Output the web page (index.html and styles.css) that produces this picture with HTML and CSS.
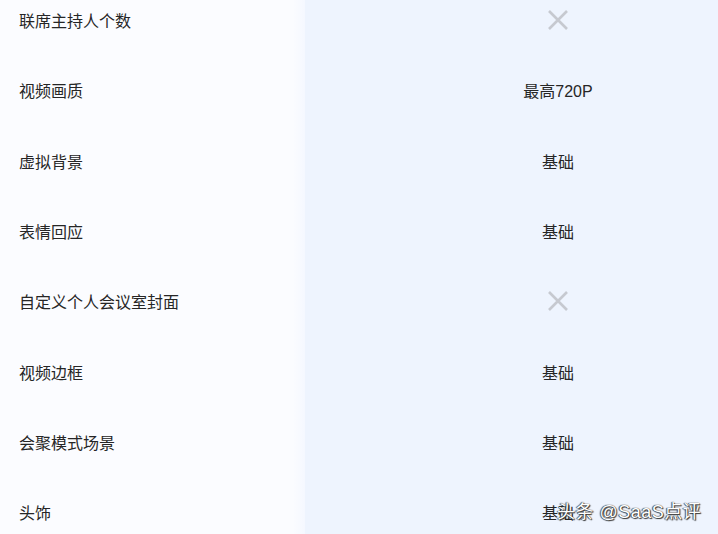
FILE: index.html
```html
<!DOCTYPE html>
<html lang="zh-CN">
<head>
    <meta charset="UTF-8">
    <meta name="viewport" content="width=device-width, initial-scale=1.0">
    <title>功能对比</title>
    <link rel="stylesheet" href="styles.css">
</head>
<body>
    <div class="compare">
        <div class="col-name">
            <div class="cell">联席主持人个数</div>
            <div class="cell">视频画质</div>
            <div class="cell">虚拟背景</div>
            <div class="cell">表情回应</div>
            <div class="cell">自定义个人会议室封面</div>
            <div class="cell">视频边框</div>
            <div class="cell">会聚模式场景</div>
            <div class="cell">头饰</div>
        </div>
        <div class="col-plan">
            <div class="cell">
                <svg class="no" width="22" height="22" viewBox="0 0 22 22"><path d="M2 2 L20 20 M20 2 L2 20" stroke="#c6c9d0" stroke-width="2.6" fill="none"/></svg>
            </div>
            <div class="cell">最高720P</div>
            <div class="cell">基础</div>
            <div class="cell">基础</div>
            <div class="cell">
                <svg class="no" width="22" height="22" viewBox="0 0 22 22"><path d="M2 2 L20 20 M20 2 L2 20" stroke="#c6c9d0" stroke-width="2.6" fill="none"/></svg>
            </div>
            <div class="cell">基础</div>
            <div class="cell">基础</div>
            <div class="cell">基础</div>
        </div>
    </div>
    <div class="watermark">头条 @SaaS点评</div>
</body>
</html>
```

FILE: styles.css
```css
html, body {
    margin: 0;
    padding: 0;
    height: 100%;
    overflow: hidden;
}

body {
    font-family: "Liberation Sans", "Noto Sans CJK SC", sans-serif;
    color: #262626;
    background-color: #fbfcff;
    position: relative;
}

.compare {
    display: flex;
    margin-top: -15px;
}

.col-name {
    width: 305px;
    flex-shrink: 0;
    background: linear-gradient(to right, #fbfcff 96%, #f5f8ff);
}

.col-plan {
    flex: 1;
    background-color: #eef4fe;
}

.cell {
    height: 70.3px;
    display: flex;
    align-items: center;
    font-size: 16px;
}

.col-name .cell {
    padding-left: 19px;
}

.col-plan .cell {
    justify-content: center;
    padding-left: 93px;
}

.no {
    display: block;
}

.watermark {
    position: absolute;
    left: 557px;
    top: 497px;
    font-size: 18px;
    color: #ffffff;
    text-shadow: 0 0 1px #222, 1px 1px 1px #333, -1px 0 1px #555;
    letter-spacing: 0.5px;
}
```
